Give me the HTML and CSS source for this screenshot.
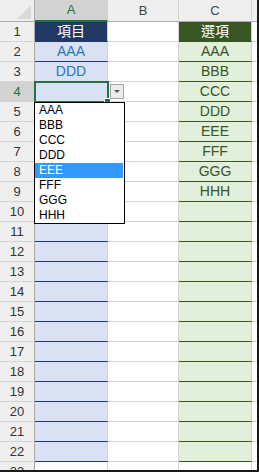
FILE: index.html
```html
<!DOCTYPE html>
<html lang="zh-Hant">
<head>
<meta charset="UTF-8">
<title>資料驗證清單</title>
<link rel="stylesheet" href="styles.css">
</head>
<body>

<div class="sheet">
  <div class="grid">
    <div class="corner"></div>
    <div class="colhead on">A</div>
    <div class="colhead">B</div>
    <div class="colhead">C</div>
    <div class="colhead end"></div>

    <div class="rowhead">1</div>
    <div class="cell a title">項目</div>
    <div class="cell"></div>
    <div class="cell c title">選項</div>
    <div class="cell end"></div>

    <div class="rowhead">2</div>
    <div class="cell a">AAA</div>
    <div class="cell"></div>
    <div class="cell c">AAA</div>
    <div class="cell end"></div>

    <div class="rowhead">3</div>
    <div class="cell a">DDD</div>
    <div class="cell"></div>
    <div class="cell c">BBB</div>
    <div class="cell end"></div>

    <div class="rowhead on">4</div>
    <div class="cell a"></div>
    <div class="cell"></div>
    <div class="cell c">CCC</div>
    <div class="cell end"></div>

    <div class="rowhead">5</div>
    <div class="cell a"></div>
    <div class="cell"></div>
    <div class="cell c">DDD</div>
    <div class="cell end"></div>

    <div class="rowhead">6</div>
    <div class="cell a"></div>
    <div class="cell"></div>
    <div class="cell c">EEE</div>
    <div class="cell end"></div>

    <div class="rowhead">7</div>
    <div class="cell a"></div>
    <div class="cell"></div>
    <div class="cell c">FFF</div>
    <div class="cell end"></div>

    <div class="rowhead">8</div>
    <div class="cell a"></div>
    <div class="cell"></div>
    <div class="cell c">GGG</div>
    <div class="cell end"></div>

    <div class="rowhead">9</div>
    <div class="cell a"></div>
    <div class="cell"></div>
    <div class="cell c">HHH</div>
    <div class="cell end"></div>

    <div class="rowhead">10</div>
    <div class="cell a"></div>
    <div class="cell"></div>
    <div class="cell c"></div>
    <div class="cell end"></div>

    <div class="rowhead">11</div>
    <div class="cell a"></div>
    <div class="cell"></div>
    <div class="cell c"></div>
    <div class="cell end"></div>

    <div class="rowhead">12</div>
    <div class="cell a"></div>
    <div class="cell"></div>
    <div class="cell c"></div>
    <div class="cell end"></div>

    <div class="rowhead">13</div>
    <div class="cell a"></div>
    <div class="cell"></div>
    <div class="cell c"></div>
    <div class="cell end"></div>

    <div class="rowhead">14</div>
    <div class="cell a"></div>
    <div class="cell"></div>
    <div class="cell c"></div>
    <div class="cell end"></div>

    <div class="rowhead">15</div>
    <div class="cell a"></div>
    <div class="cell"></div>
    <div class="cell c"></div>
    <div class="cell end"></div>

    <div class="rowhead">16</div>
    <div class="cell a"></div>
    <div class="cell"></div>
    <div class="cell c"></div>
    <div class="cell end"></div>

    <div class="rowhead">17</div>
    <div class="cell a"></div>
    <div class="cell"></div>
    <div class="cell c"></div>
    <div class="cell end"></div>

    <div class="rowhead">18</div>
    <div class="cell a"></div>
    <div class="cell"></div>
    <div class="cell c"></div>
    <div class="cell end"></div>

    <div class="rowhead">19</div>
    <div class="cell a"></div>
    <div class="cell"></div>
    <div class="cell c"></div>
    <div class="cell end"></div>

    <div class="rowhead">20</div>
    <div class="cell a"></div>
    <div class="cell"></div>
    <div class="cell c"></div>
    <div class="cell end"></div>

    <div class="rowhead">21</div>
    <div class="cell a"></div>
    <div class="cell"></div>
    <div class="cell c"></div>
    <div class="cell end"></div>

    <div class="rowhead">22</div>
    <div class="cell a"></div>
    <div class="cell"></div>
    <div class="cell c"></div>
    <div class="cell end"></div>

    <div class="rowhead">23</div>
    <div class="cell"></div>
    <div class="cell"></div>
    <div class="cell"></div>
    <div class="cell end"></div>
  </div>

  <div class="selection"><span class="handle"></span></div>
  <div class="drop-btn"><span class="arrow"></span></div>
  <ul class="drop-list">
    <li>AAA</li>
    <li>BBB</li>
    <li>CCC</li>
    <li>DDD</li>
    <li class="picked">EEE</li>
    <li>FFF</li>
    <li>GGG</li>
    <li>HHH</li>
  </ul>
</div>

</body>
</html>
```

FILE: styles.css
```css
body {
  margin: 0;
  background-color: #fff;
  font-family: "Liberation Sans", "Noto Sans CJK TC", sans-serif;
}
.sheet {
  position: relative;
  width: 259px;
  height: 472px;
  box-sizing: border-box;
  border-right: 2px solid #1a1a1a;
  border-bottom: 2px solid #1a1a1a;
  overflow: hidden;
}
.grid {
  display: grid;
  grid-template-columns: 35px 73px 71px 73px 5px;
  grid-template-rows: 22px;
  grid-auto-rows: 20px;
}
.grid > div {
  box-sizing: border-box;
  border-right: 1px solid #d4d4d4;
  border-bottom: 1px solid #d4d4d4;
  text-align: center;
  line-height: 19px;
  font-size: 13px;
}
.corner {
  position: relative;
  background-color: #efefef;
  border-right-color: #ababab !important;
  border-bottom-color: #ababab !important;
}
.corner::after {
  content: "";
  position: absolute;
  right: 3px;
  bottom: 2px;
  border-left: 14px solid transparent;
  border-bottom: 14px solid #d9d9d9;
}
.colhead {
  background-color: #efefef;
  color: #444;
  line-height: 21px !important;
  border-bottom-color: #ababab !important;
}
.colhead.on {
  background-color: #d2d2d2;
  color: #217346;
  border-bottom: 2px solid #217346 !important;
  line-height: 20px !important;
}
.rowhead {
  background-color: #efefef;
  color: #333;
  border-right-color: #ababab !important;
}
.rowhead.on {
  background-color: #d2d2d2;
  color: #217346;
}
.grid > .end {
  border-right: none;
}
.grid > .a {
  background-color: #d9e1f2;
  border-bottom-color: #1f3864;
  color: #2e75b6;
  font-size: 14px;
}
.grid > .c {
  background-color: #e2efda;
  border-bottom-color: #375623;
  color: #375623;
  font-size: 14px;
}
.grid > .title {
  color: #fff;
  font-size: 14px;
}
.grid > .a.title {
  background-color: #1f3864;
}
.grid > .c.title {
  background-color: #375623;
}

/* selected cell A4 and its list */
.selection {
  position: absolute;
  left: 34px;
  top: 81px;
  width: 75px;
  height: 22px;
  box-sizing: border-box;
  border: 2px solid #217346;
}
.handle {
  position: absolute;
  right: -4px;
  bottom: -4px;
  width: 5px;
  height: 5px;
  background-color: #217346;
  border: 1px solid #fff;
}
.drop-btn {
  position: absolute;
  left: 110px;
  top: 84px;
  width: 14px;
  height: 15px;
  box-sizing: border-box;
  border: 1px solid #a6a6a6;
  background-color: #ececec;
  display: flex;
  align-items: center;
  justify-content: center;
}
.arrow {
  border-left: 3px solid transparent;
  border-right: 3px solid transparent;
  border-top: 3px solid #555;
}
.drop-list {
  position: absolute;
  left: 34px;
  top: 102px;
  width: 91px;
  height: 122px;
  box-sizing: border-box;
  margin: 0;
  padding: 0 1px 0 0;
  list-style: none;
  background-color: #fff;
  border: 1px solid #000;
  font-size: 12px;
}
.drop-list li {
  height: 15px;
  line-height: 15px;
  padding-left: 4px;
  color: #000;
}
.drop-list .picked {
  background-color: #3399ff;
  color: #fff;
}
```
